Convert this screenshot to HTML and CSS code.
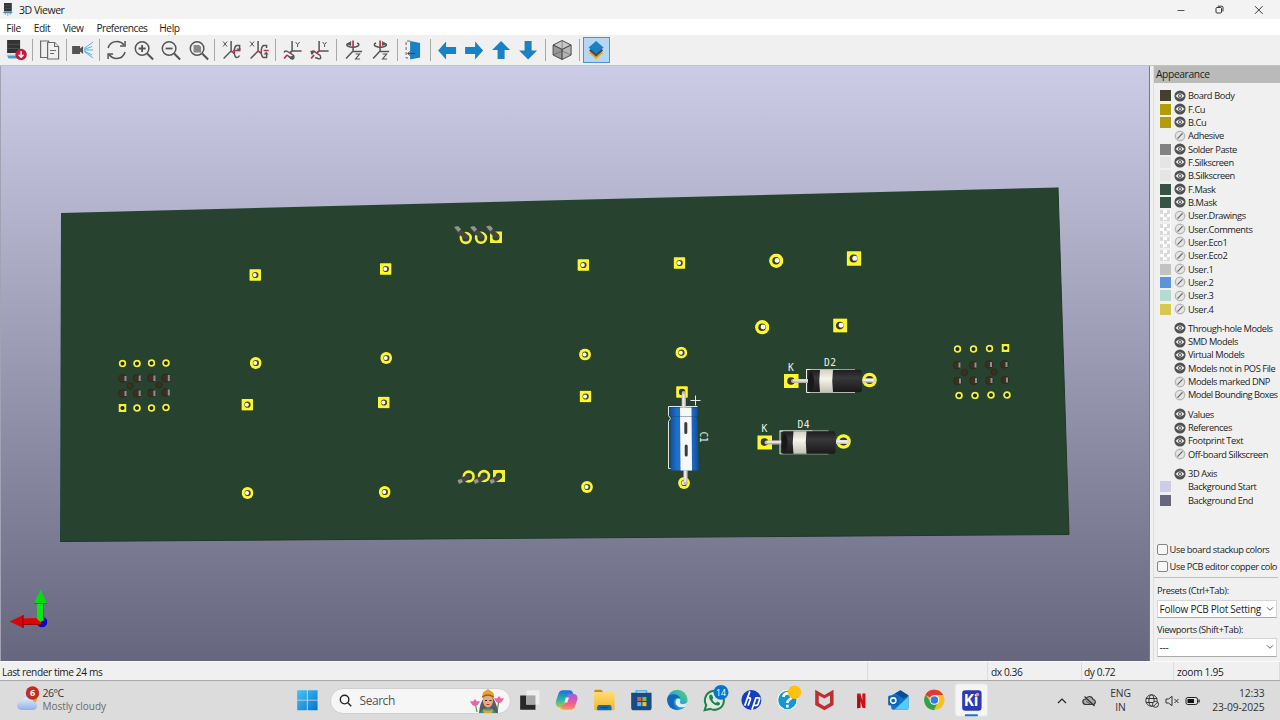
FILE: index.html
```html
<!DOCTYPE html>
<html lang="en">
<head>
<meta charset="utf-8">
<title>3D Viewer</title>
<link rel="stylesheet" href="styles.css">
</head>
<body>
<svg class="defs" width="0" height="0">
  <defs>
    <linearGradient id="sky" x1="0" y1="0" x2="0" y2="1"><stop offset="0" stop-color="#cccce6"/><stop offset="1" stop-color="#66667f"/></linearGradient>
    <linearGradient id="black-body" x1="0" y1="0" x2="0" y2="1"><stop offset="0" stop-color="#1d1d1e"/><stop offset=".35" stop-color="#38383b"/><stop offset="1" stop-color="#19191a"/></linearGradient>
    <linearGradient id="band" x1="0" y1="0" x2="0" y2="1"><stop offset="0" stop-color="#d3d1c4"/><stop offset=".4" stop-color="#f7f5ea"/><stop offset="1" stop-color="#c3c1b4"/></linearGradient>
    <linearGradient id="blue-can" x1="0" y1="0" x2="1" y2="0"><stop offset="0" stop-color="#0e4f9e"/><stop offset=".25" stop-color="#2070cc"/><stop offset=".8" stop-color="#1b66c0"/><stop offset="1" stop-color="#124a94"/></linearGradient>
    <linearGradient id="win" x1="0" y1="0" x2="1" y2="1"><stop offset="0" stop-color="#45c5f5"/><stop offset="1" stop-color="#0673cf"/></linearGradient>
    <linearGradient id="cloud" x1="0" y1="0" x2="0" y2="1"><stop offset="0" stop-color="#e5effb"/><stop offset="1" stop-color="#8fb2ea"/></linearGradient>
    <linearGradient id="edge" x1="0" y1="1" x2="1" y2="0"><stop offset="0" stop-color="#0b63bd"/><stop offset=".5" stop-color="#25a7d8"/><stop offset="1" stop-color="#62d65a"/></linearGradient>
    <linearGradient id="folder" x1="0" y1="0" x2="0" y2="1"><stop offset="0" stop-color="#ffdc6b"/><stop offset="1" stop-color="#f2b62f"/></linearGradient>
    <linearGradient id="cop-a" x1="0" y1="0" x2="0" y2="1"><stop offset="0" stop-color="#1a6fe0"/><stop offset=".5" stop-color="#2db6a5"/><stop offset="1" stop-color="#f0c62c"/></linearGradient>
    <linearGradient id="cop-b" x1="0" y1="0" x2="0" y2="1"><stop offset="0" stop-color="#a35be6"/><stop offset=".6" stop-color="#ef5d8f"/><stop offset="1" stop-color="#fb9a50"/></linearGradient>

    <symbol id="eye" viewBox="0 0 12 12"><circle cx="6" cy="6" r="5.6" fill="#4f5153"/><path d="M1.7 6Q6 1.1 10.3 6Q6 10.9 1.7 6z" fill="#f4f4f4"/><circle cx="6" cy="6" r="2" fill="#4f5153"/><circle cx="6" cy="6" r=".9" fill="#f4f4f4"/></symbol>
    <symbol id="off" viewBox="0 0 12 12"><circle cx="6" cy="6" r="4.7" fill="#e6e6e6" stroke="#b9b9b9" stroke-width="1.4"/><path d="M3.5 8.6l5-5.2" stroke="#666" stroke-width="1.3"/></symbol>
    <symbol id="chev" viewBox="0 0 8 6"><path d="M1 1.3l3 3 3-3" fill="none" stroke="#666" stroke-width="1"/></symbol>

    <symbol id="sq" viewBox="0 0 14 14"><rect x=".2" y=".2" width="13.6" height="13.6" rx=".8" fill="#fcf82c"/><circle cx="6.6" cy="7" r="3.7" fill="#37341f"/><circle cx="7.8" cy="6.8" r="2.4" fill="#f5f5f5"/></symbol>
    <symbol id="rd" viewBox="0 0 14 14"><circle cx="7" cy="7" r="6.9" fill="#fcf82c"/><circle cx="6.8" cy="7" r="3.6" fill="#37341f"/><circle cx="7.8" cy="6.8" r="2.4" fill="#f5f5f5"/></symbol>
    <symbol id="sqs" viewBox="0 0 12 12"><rect x=".2" y=".2" width="11.6" height="11.6" rx=".8" fill="#fcf82c"/><circle cx="6.2" cy="6" r="3.1" fill="#4a4531"/><circle cx="5.5" cy="6" r="2" fill="#fff"/></symbol>
    <symbol id="rds" viewBox="0 0 12 12"><circle cx="6" cy="6" r="5.9" fill="#fcf82c"/><circle cx="6.2" cy="6" r="3.1" fill="#4a4531"/><circle cx="5.5" cy="6" r="2" fill="#fff"/></symbol>
    <symbol id="pin" viewBox="0 0 8 8"><circle cx="4" cy="4" r="2.9" fill="#21261a" stroke="#f4f136" stroke-width="1.8"/></symbol>
    <symbol id="pinsq" viewBox="0 0 8 8"><rect width="8" height="8" rx=".6" fill="#f4f136"/><circle cx="4" cy="4" r="2.1" fill="#21261a"/></symbol>
    <symbol id="diode" viewBox="0 0 91 26">
      <path d="M54 2.5H21.5v23H70" fill="none" stroke="#e9eee9"/><path d="M21 2.5h49" stroke="#e9eee9" stroke-width=".8"/>
      <path d="M8 14h18" stroke="#b6b2a8" stroke-width="4.2" stroke-linecap="round"/><path d="M9 13.3h17" stroke="#e6e3da" stroke-width="2.2" stroke-linecap="round"/>
      <rect x="23" y="2.8" width="54" height="22.4" rx="2.5" fill="url(#black-body)"/><ellipse cx="26" cy="14" rx="3" ry="9" fill="#18181a"/>
      <path d="M35 2.8h13q-1.5 11 0 22.4H35q-1.5-11 0-22.4z" fill="url(#band)"/>
      <path d="M77.5 13.5h11.500" stroke="#c8c5bb" stroke-width="4.2"/><circle cx="89" cy="13.5" r="2.1" fill="#d8d5cb"/><path d="M78 12.8h11" stroke="#f1efe8" stroke-width="2.2"/>
    </symbol>
  </defs>
</svg>

<header class="titlebar">
  <svg class="app-icon" viewBox="0 0 10 13"><path d="M1 0h7.8v8.5H1z" fill="#333638"/><path d="M.8 2.8h8M.8 5.5h8" stroke="#54585a" stroke-width=".6"/><path d="M0 9h9.8l-1 1.3h-8z" fill="#4e87ad"/><path d="M2.3 10v2M4.8 10v3M7.3 10v2" stroke="#7ab4dc"/></svg>
  <span class="title">3D Viewer</span>
  <svg class="winctl" viewBox="0 0 90 12"><path d="M.5 6.5h7" stroke="#555" stroke-width="1"/><g fill="none" stroke="#333" stroke-width="1"><rect x="39" y="3.5" width="5.5" height="5.5" rx="1"/><path d="M40.8 2.2h4q1.2 0 1.2 1.2v4"/><path d="M78 2.2l7.6 7.6M85.6 2.2L78 9.8"/></g></svg>
</header>
<nav class="menubar"><span>File</span><span>Edit</span><span>View</span><span class="wide">Preferences</span><span>Help</span></nav>

<div class="toolbar">
  <svg class="tb" viewBox="0 0 27 26"><path d="M5 3h13v13H5z" fill="#303233"/><path d="M5 7.3h13M5 11.5h13" stroke="#4c4f50"/><path d="M4.5 16.5h13v2h-13z" fill="#ddd"/><path d="M5 18.5h12l-1.5 3H6.5z" fill="#4a9bd4"/><circle cx="19" cy="17.5" r="5.7" fill="#c31d3d"/><path d="M19 14v6M16.5 17.8L19 20.3l2.5-2.5" fill="none" stroke="#fff" stroke-width="1.5"/></svg>
  <i class="sep"></i>
  <svg class="tb" viewBox="0 0 27 26"><g fill="#f0f0f0" stroke="#6a6a6a" stroke-width="1.2"><path d="M4.5 4h8v16.5h-8z"/><path d="M11.5 5.5h7l4 4V22h-11z"/><path d="M18.5 5.5v4h4M14 13.500h6M14 16.500h4"/></g></svg>
  <i class="sep"></i>
  <svg class="tb" viewBox="0 0 27 26"><path d="M3 9h8v2.5L14 9v8l-3-2.5V17H3z" fill="#545454"/><path d="M15 11.5L24 5M15 12.5l8-3M15 13h9M15 14l8 4M15 14.5L24 21" stroke="#55b1e3" stroke-width="1"/></svg>
  <i class="sep"></i>
  <svg class="tb" viewBox="0 0 27 26"><g fill="none" stroke="#555" stroke-width="1.5"><path d="M5 11q2-6.5 9-6.5 4 0 7 3.500M22 15q-2 6.5-8.5 6.500-4.500 0-7.500-4"/><path d="M22 4v5h-5M5 22v-5h5"/></g></svg>
  <svg class="tb" viewBox="0 0 27 26"><g fill="none" stroke="#555" stroke-width="1.5"><circle cx="12" cy="11.5" r="6.8"/><path d="M17 16.5l6 6" stroke-width="2"/><path d="M12 8v7M8.500 11.500h7" stroke-width="1.8"/></g></svg>
  <svg class="tb" viewBox="0 0 27 26"><g fill="none" stroke="#555" stroke-width="1.5"><circle cx="12" cy="11.5" r="6.8"/><path d="M17 16.5l6 6" stroke-width="2"/><path d="M8.5 11.5h7" stroke-width="1.8"/></g></svg>
  <svg class="tb" viewBox="0 0 27 26"><g fill="none" stroke="#555" stroke-width="1.5"><circle cx="12" cy="11.5" r="6.8"/><path d="M17 16.5l6 6" stroke-width="2"/></g><path d="M8.5 8h5.500l2 2v5.500H8.500z" fill="#888"/></svg>
  <i class="sep"></i>
  <svg class="tb" viewBox="0 0 27 26"><g fill="none" stroke="#555" stroke-width="1.5"><path d="M5 4.5l4 5M9 4.5l-4 5" stroke-width="1"/><path d="M13 4v10L5.5 21.5"/><path d="M21.5 12V8.500h-3q-2.300 1-2.300 6t2 6q2 .5 3.300-2"/></g><path d="M13 14l3.500 2.500M15 13.500h7.500" stroke="#c32b4c" stroke-width="1.6"/><path d="M18.500 11.500h4.500l-2 3z" fill="#555"/></svg>
  <svg class="tb" viewBox="0 0 27 26"><g fill="none" stroke="#555" stroke-width="1.5"><path d="M5 4.5l4 5M9 4.5l-4 5" stroke-width="1"/><path d="M13 4v10L5.5 21.5"/><path d="M21.500 11V8.500h-3q-2.300 1-2.300 6t2 6h3.300V17"/></g><path d="M13 14l3.500 2.500M18.500 13.500h5" stroke="#c32b4c" stroke-width="1.6"/><path d="M18.500 17.500h5l-2.500-3z" fill="#555"/></svg>
  <i class="sep"></i>
  <svg class="tb" viewBox="0 0 27 26"><g fill="none" stroke="#555" stroke-width="1.5"><path d="M13 4v10h9.500"/><path d="M16.500 5l2 2.500 2-2.500M18.500 7.500V10" stroke-width="1"/><path d="M5 15.500q1-3 5 0l4.500 3q1.500 4-2.500 3l-4-3.500"/></g><path d="M9.500 20l5-1.500-.5 4.500z" fill="#555"/><path d="M13 14l-2.500 2M8 18l-3 3.500" stroke="#c32b4c" stroke-width="1.800"/></svg>
  <svg class="tb" viewBox="0 0 27 26"><g fill="none" stroke="#555" stroke-width="1.5"><path d="M13 4v10h9.500"/><path d="M16.500 5l2 2.500 2-2.500M18.500 7.500V10" stroke-width="1"/><path d="M6 17.500q-2-4 2-3l6 4q2 4-2 3l-3-1"/></g><path d="M4 14l5-.5-2.500 4z" fill="#555"/><path d="M13 14l-2.500 2M8 18l-3 3.500" stroke="#c32b4c" stroke-width="1.800"/></svg>
  <i class="sep"></i>
  <svg class="tb" viewBox="0 0 27 26"><g fill="none" stroke="#555" stroke-width="1.5"><path d="M13 10v4.500h9M13 14l-7 7.500"/><path d="M15.500 17h4l-4 5h4.500" stroke-width="1.2"/><path d="M10 6q-5 1-2.500 3 5 2.500 10.500 0 2-2-1-3"/></g><path d="M11 4v5L6.500 7z" fill="#555"/><path d="M13 3.500V10" stroke="#c32b4c" stroke-width="1.700"/></svg>
  <svg class="tb" viewBox="0 0 27 26"><g fill="none" stroke="#555" stroke-width="1.5"><path d="M13 10v4.500h9M13 14l-7 7.500"/><path d="M15.500 17h4l-4 5h4.500" stroke-width="1.2"/><path d="M16 6q5 1 2.500 3-5 2.500-10.500 0-2-2 1-3"/></g><path d="M15 4v5l4.500-2z" fill="#555"/><path d="M13 3.500V10" stroke="#c32b4c" stroke-width="1.700"/></svg>
  <i class="sep"></i>
  <svg class="tb" viewBox="0 0 27 26"><path d="M10 4l10 2v14.500L10 22.500z" fill="#1a81c4"/><path d="M10 4H6v17h4" fill="none" stroke="#666" stroke-dasharray="3 2"/><path d="M8 16.500h7M10 14.500l-2.500 2 2.500 2" fill="none" stroke="#444"/></svg>
  <i class="sep"></i>
  <svg class="tb" viewBox="0 0 27 26"><path d="M4 13.500l8-9V10h10v7H12v5.500z" fill="#1a81c4"/></svg>
  <svg class="tb" viewBox="0 0 27 26"><path d="M22 13.500l-8-9V10H4v7h10v5.500z" fill="#1a81c4"/></svg>
  <svg class="tb" viewBox="0 0 27 26"><path d="M13 4l9 9h-5.500v9h-7v-9H4z" fill="#1a81c4"/></svg>
  <svg class="tb" viewBox="0 0 27 26"><path d="M13 22.500l9-9h-5.500V4h-7v9.500H4z" fill="#1a81c4"/></svg>
  <i class="sep"></i>
  <svg class="tb" viewBox="0 0 27 26"><g stroke="#4b4b4b" stroke-width="1"><path d="M13 3.500l9 4.500-9 4.500L4 8z" fill="#c8c8c8"/><path d="M4 8l9 4.500v10L4 18z" fill="#989898"/><path d="M22 8l-9 4.500v10l9-4.500z" fill="#b5b5b5"/><path d="M4 18l9-4 9 4M13 3.500V14" fill="none" stroke-width=".5"/></g></svg>
  <i class="sep"></i>
  <svg class="tb on" viewBox="0 0 27 26"><path d="M6 16l7 6 7-6-2-2H8z" fill="#eda01f"/><path d="M6 13.500l7 6 7-6-2-2H8z" fill="#474747"/><path d="M13 4l7.500 6.500L13 17l-7.500-6.500z" fill="#1a81c4"/></svg>
</div>

<main class="work">
  <svg class="scene" viewBox="0 66 1150 595">
    <rect x="0" y="66" width="1150" height="595" fill="url(#sky)"/>
    <path d="M.5 66v595" stroke="#a2a2b4"/><path d="M1149.500 66v595" stroke="#77778a"/>
    <path d="M61 213L1058 187.500 1069 534.500 60 541.500z" fill="#27432f"/>
    <path d="M1058 187.500L1069 534.500 60 541.500" fill="none" stroke="#1f3927"/>

    <use href="#sqs" x="249.200" y="269" width="12" height="12"/><use href="#sqs" x="379.700" y="263" width="12" height="12"/><use href="#sqs" x="577.300" y="259" width="12" height="12"/><use href="#sqs" x="673.500" y="257" width="12" height="12"/>
    <use href="#rds" x="249.700" y="357" width="12" height="12"/><use href="#rds" x="380.200" y="352" width="12" height="12"/><use href="#rds" x="579" y="348.500" width="12" height="12"/><use href="#rds" x="675.300" y="346.700" width="12" height="12"/>
    <use href="#sqs" x="241.300" y="398.700" width="12" height="12"/><use href="#sqs" x="377.800" y="396.500" width="12" height="12"/><use href="#sqs" x="579.500" y="390.500" width="12" height="12"/><use href="#sqs" x="676" y="386" width="12" height="12"/>
    <use href="#rds" x="241.500" y="487" width="12" height="12"/><use href="#rds" x="378.700" y="486" width="12" height="12"/><use href="#rds" x="581" y="481" width="12" height="12"/><use href="#rds" x="678" y="477" width="12" height="12"/>
    <use href="#rd" x="769" y="253.500" width="14.500" height="14.500"/><use href="#rd" x="755" y="320" width="14.500" height="14.500"/>
    <use href="#sq" x="846.500" y="251" width="15" height="15"/><use href="#sq" x="833" y="318.300" width="14.500" height="14.500"/>

    <g fill="none" stroke="#f4f136" stroke-width="2.600"><circle cx="465.800" cy="238" r="4.900"/><circle cx="481" cy="237.800" r="4.900"/><circle cx="468.700" cy="476.500" r="4.900"/><circle cx="484" cy="476" r="4.900"/></g>
    <path d="M490 231.500h12V243h-12zM493 470h12v12h-12z" fill="#f4f136"/>
    <g fill="#27432f"><circle cx="496" cy="237" r="3.500"/><circle cx="499" cy="476" r="3.200"/></g>
    <g stroke="#43463f" stroke-width="5" stroke-linecap="round"><path d="M457.500 229.500l8 7M473.500 229.300l8 7M489.500 229l7 7M460.500 481l7-3.500M476.500 481l7-3.500M492.500 481l6-3.500"/></g>
    <g fill="#929693"><path d="M454 227l4-1 3 3-2.500 3zM470 227l4-1 3 3-2.500 3zM486 226.500l4-1 3 3-2.500 3z"/><path d="M457.500 480l4-1 1.500 3-4 2zM473.500 480l4-1 1.500 3-4 2zM489.500 480l4-1 1.500 3-4 2z"/></g>

    <g fill="#3d2f1e" stroke="#262b1c" stroke-width=".8">
      <circle cx="122.500" cy="378.500" r="3.900"/><circle cx="137" cy="378.300" r="3.900"/><circle cx="151.500" cy="378" r="3.900"/><circle cx="165.500" cy="378" r="3.900"/>
      <circle cx="122.500" cy="393.500" r="3.900"/><circle cx="137" cy="393.300" r="3.900"/><circle cx="151.500" cy="393" r="3.900"/><circle cx="165.500" cy="392.500" r="3.900"/>
      <circle cx="957" cy="365" r="3.900"/><circle cx="973" cy="365" r="3.900"/><circle cx="989" cy="364.500" r="3.900"/><circle cx="1004.500" cy="364.300" r="3.900"/>
      <circle cx="957.500" cy="381" r="3.900"/><circle cx="973.500" cy="380.700" r="3.900"/><circle cx="989.500" cy="380.500" r="3.900"/><circle cx="1005" cy="380" r="3.900"/>
      <circle cx="130" cy="386" r="3.200"/><circle cx="159" cy="385" r="3.200"/><circle cx="964.500" cy="372.500" r="3.200"/><circle cx="994" cy="372" r="3.200"/>
    </g>
    <g stroke="#8f8f98" stroke-width="2">
      <path d="M125.500 376v5M139.700 375.500v5.500M154.400 375.500v5.500M168.800 375v6M125.500 391v5M139.700 390.500v5.500M154.400 390.500v5.500M168.800 389.500v6"/>
      <path d="M959.500 362.500v5M975.500 362.500v5M991 362v5M1006.500 362v5M960 378.500v5M976 378v5M991.500 378v5M1007 377.500v5"/>
    </g>
    <use href="#pin" x="118.500" y="359.500" width="8" height="8"/><use href="#pin" x="133" y="359.500" width="8" height="8"/><use href="#pin" x="147.500" y="359" width="8" height="8"/><use href="#pin" x="162" y="359" width="8" height="8"/>
    <use href="#pinsq" x="118.500" y="404" width="8" height="8"/><use href="#pin" x="133" y="404" width="8" height="8"/><use href="#pin" x="147.500" y="404" width="8" height="8"/><use href="#pin" x="162" y="403.500" width="8" height="8"/>
    <use href="#pin" x="953.500" y="345" width="8" height="8"/><use href="#pin" x="969.500" y="345" width="8" height="8"/><use href="#pin" x="985.500" y="344.500" width="8" height="8"/><use href="#pinsq" x="1001.500" y="344" width="8" height="8"/>
    <use href="#pin" x="955" y="391.500" width="8" height="8"/><use href="#pin" x="971" y="391.500" width="8" height="8"/><use href="#pin" x="987" y="391" width="8" height="8"/><use href="#pin" x="1003" y="391" width="8" height="8"/>

    <path d="M784 374h14.500v14H784zM757.500 435.500H772v14h-14.500z" fill="#fcf82c"/>
    <circle cx="869.500" cy="380" r="7.300" fill="#fcf82c"/><circle cx="869.500" cy="380" r="4" fill="#37341f"/><circle cx="843.500" cy="441.500" r="7.300" fill="#fcf82c"/><circle cx="843.500" cy="441.500" r="4" fill="#37341f"/>
    <circle cx="791" cy="381" r="3.800" fill="#37341f"/><circle cx="764.500" cy="442" r="3.800" fill="#37341f"/>
    <use href="#diode" x="785" y="367" width="91" height="26"/><use href="#diode" x="758.500" y="428.500" width="91" height="26"/>
    <g class="silk"><text x="824" y="366.300" textLength="12">D2</text><text x="797.500" y="427.500" textLength="12">D4</text><text x="788" y="371.300">K</text><text x="761.500" y="432.300">K</text><text transform="translate(700 431.500) rotate(90)" textLength="11">C1</text></g>

    <path d="M697.500 406.500H668.500v9l2 3-2 3v47h3M690.500 400.500h10M695.500 395.500v10" fill="none" stroke="#e4ebe5"/>
    <circle cx="682" cy="392" r="3.200" fill="#37341f"/>
    <path d="M683.800 393v15M685.500 469v14" stroke="#c2beb5" stroke-width="4.200" stroke-linecap="round"/><path d="M683.500 394v14M685.200 469v13" stroke="#eeebe4" stroke-width="2"/>
    <path d="M670 407.500h27.500v8l-1 2 1 3 1.300 50H670.500V420l1.500-2-2-3z" fill="url(#blue-can)"/>
    <path d="M680 407.500h11.500l.5 63h-11.500z" fill="#f7f8fa"/><path d="M671 416.500h26" stroke="#123f78" stroke-opacity=".4"/>
    <path d="M685.800 423.500v9M686.200 446v9" stroke="#3c3c3f" stroke-width="3" stroke-linecap="round"/>

    <circle cx="42" cy="622" r="5.300" fill="#0505c5"/>
    <path d="M22 618.500l19-.5v7H22z" fill="#e40000"/><path d="M9.500 621.500l14-6.500v13z" fill="#d70505"/><path d="M23 615v13" stroke="#8e0000"/><path d="M22 624.500h19" stroke="#920000"/>
    <path d="M37 602h7v18l-3.500 2-3.500-3z" fill="#04ea0e"/><path d="M40.500 589.500l6.500 14H34z" fill="#04dc0e"/><path d="M34 603.500h13M43.500 604v16" stroke="#078a0d"/>
  </svg>

  <aside class="panel">
    <h2>Appearance</h2>
    <div class="rows">
      <div class="row"><i class="sw body"></i><svg><use href="#eye"/></svg><span>Board Body</span></div>
      <div class="row"><i class="sw cu"></i><svg><use href="#eye"/></svg><span>F.Cu</span></div>
      <div class="row"><i class="sw cu"></i><svg><use href="#eye"/></svg><span>B.Cu</span></div>
      <div class="row"><i class="sw"></i><svg><use href="#off"/></svg><span>Adhesive</span></div>
      <div class="row"><i class="sw paste"></i><svg><use href="#eye"/></svg><span>Solder Paste</span></div>
      <div class="row"><i class="sw silkc"></i><svg><use href="#eye"/></svg><span>F.Silkscreen</span></div>
      <div class="row"><i class="sw silkc"></i><svg><use href="#eye"/></svg><span>B.Silkscreen</span></div>
      <div class="row"><i class="sw mask"></i><svg><use href="#eye"/></svg><span>F.Mask</span></div>
      <div class="row"><i class="sw mask"></i><svg><use href="#eye"/></svg><span>B.Mask</span></div>
      <div class="row"><i class="sw check"></i><svg><use href="#off"/></svg><span>User.Drawings</span></div>
      <div class="row"><i class="sw check"></i><svg><use href="#off"/></svg><span>User.Comments</span></div>
      <div class="row"><i class="sw check"></i><svg><use href="#off"/></svg><span>User.Eco1</span></div>
      <div class="row"><i class="sw check"></i><svg><use href="#off"/></svg><span>User.Eco2</span></div>
      <div class="row"><i class="sw u1"></i><svg><use href="#off"/></svg><span>User.1</span></div>
      <div class="row"><i class="sw u2"></i><svg><use href="#off"/></svg><span>User.2</span></div>
      <div class="row"><i class="sw u3"></i><svg><use href="#off"/></svg><span>User.3</span></div>
      <div class="row"><i class="sw u4"></i><svg><use href="#off"/></svg><span>User.4</span></div>
    </div>
    <div class="rows">
      <div class="row"><i class="sw"></i><svg><use href="#eye"/></svg><span>Through-hole Models</span></div>
      <div class="row"><i class="sw"></i><svg><use href="#eye"/></svg><span>SMD Models</span></div>
      <div class="row"><i class="sw"></i><svg><use href="#eye"/></svg><span>Virtual Models</span></div>
      <div class="row"><i class="sw"></i><svg><use href="#eye"/></svg><span>Models not in POS File</span></div>
      <div class="row"><i class="sw"></i><svg><use href="#off"/></svg><span>Models marked DNP</span></div>
      <div class="row tight"><i class="sw"></i><svg><use href="#off"/></svg><span>Model Bounding Boxes</span></div>
    </div>
    <div class="rows">
      <div class="row"><i class="sw"></i><svg><use href="#eye"/></svg><span>Values</span></div>
      <div class="row"><i class="sw"></i><svg><use href="#eye"/></svg><span>References</span></div>
      <div class="row"><i class="sw"></i><svg><use href="#eye"/></svg><span>Footprint Text</span></div>
      <div class="row"><i class="sw"></i><svg><use href="#off"/></svg><span>Off-board Silkscreen</span></div>
    </div>
    <div class="rows">
      <div class="row"><i class="sw"></i><svg><use href="#eye"/></svg><span>3D Axis</span></div>
      <div class="row"><i class="sw bgs"></i><svg></svg><span>Background Start</span></div>
      <div class="row"><i class="sw bge"></i><svg></svg><span>Background End</span></div>
    </div>
    <div class="options">
      <div class="opt"><i class="box"></i><span>Use board stackup colors</span></div>
      <div class="opt"><i class="box"></i><span>Use PCB editor copper colo</span></div>
    </div>
    <div class="field">Presets (Ctrl+Tab):</div>
    <div class="select"><span>Follow PCB Plot Setting</span><svg><use href="#chev"/></svg></div>
    <div class="field second">Viewports (Shift+Tab):</div>
    <div class="select"><span>---</span><svg><use href="#chev"/></svg></div>
  </aside>
</main>

<footer class="status"><span class="msg">Last render time 24 ms</span><span class="blank"></span><span class="dx">dx 0.36</span><span class="dy">dy 0.72</span><span class="zoom">zoom 1.95</span></footer>

<div class="taskbar">
  <div class="weather">
    <svg viewBox="0 0 24 28"><circle cx="16" cy="14" r="5" fill="#f5a13a"/><path d="M6 25q-5-.5-5-4.500 0-4 4.500-4 2-4.500 6-4.500 5 0 6 5 3.500 0 3.500 4 0 4-4 4z" fill="url(#cloud)"/><circle cx="16.500" cy="8" r="6.700" fill="#c42b23"/><text x="14" y="11.300">6</text></svg>
    <div><b>26°C</b><span>Mostly cloudy</span></div>
  </div>
  <svg class="app" viewBox="0 0 36 36"><path d="M8 9h9.500v9.300H8zM18.300 9H28v9.300h-9.700zM8 19h9.500v9.500H8zM18.300 19H28v9.500h-9.700z" fill="url(#win)"/></svg>
  <div class="search">
    <svg class="lens" viewBox="0 0 14 14"><g fill="none" stroke="#222" stroke-width="1.500"><circle cx="6" cy="6" r="4.600"/><path d="M9.500 9.500l3.700 3.700"/></g></svg>
    <span>Search</span>
    <svg class="art" viewBox="0 0 34 24"><path d="M5 13l2 10M29 11l-2 12" stroke="#4b9b43" stroke-width="1.200"/><path d="M9 24q1-11 5-15h9q4 6 5 15z" fill="#5a5a62"/><path d="M10 24q3-5 8-5t8 5z" fill="#2f9b82"/><path d="M12 9q0-6 3-7l3-2 3 2q4 2 3 7z" fill="#e3a42c"/><ellipse cx="18" cy="12" rx="5" ry="6.500" fill="#e6ab80"/><path d="M12.500 8q5-4 11 0" stroke="#9c5e18" stroke-width="1.500" fill="none"/><path d="M15 11.500h2M19.500 11.500h2" stroke="#3e2118"/><path d="M16.500 15.500h3" stroke="#bd2838"/><path d="M13 20q5 3 10 0l-1 4h-8z" fill="#e0a13a"/><path d="M0 12l3 .5 2-2.500 2 2.500 3-.5q-2 5-5 5t-5-5zM24 9l3 .5 2-2.500 2 2.500 3-.5q-2 5-5 5t-5-5z" fill="#ed65a5"/></svg>
  </div>
  <div class="apps">
    <svg class="app" viewBox="0 0 36 36"><path d="M14 9h13v14H14z" fill="#efefef"/><path d="M8 14h6v9h9v5H8z" fill="#292929"/><path d="M14 14h9v9h-9z" fill="#a9a9a9"/></svg>
    <svg class="app" viewBox="0 0 36 36"><path d="M14 9h6q3 0 4 4l1 3h-4l-3 10q-1 2-4 2h-1q-2 0-2-2l-3-1q-2-2-1-6l2-6q1-4 5-4z" fill="url(#cop-a)"/><path d="M22 28h-6q-3 0-4-4l2-.5q2 0 3-4l2-7h5q4 0 4 5l-2 6q-1 4-4 4.500z" fill="url(#cop-b)"/><path d="M16.500 16h3l-1.500 5h-3z" fill="#fff" opacity=".9"/></svg>
    <svg class="app" viewBox="0 0 36 36"><path d="M8 10q0-1.500 1.500-1.500H15l2 2.500H8z" fill="#c98b17"/><path d="M8 11h20v16q0 1.500-1.500 1.500h-17Q8 28.500 8 27z" fill="url(#folder)"/><path d="M11 28.500v-3q0-2 2-2h10q2 0 2 2v3z" fill="#146bb5"/><path d="M14.500 26h7" stroke="#0b477f"/></svg>
    <svg class="app" viewBox="0 0 36 36"><path d="M13 12V9.500h10V12" fill="none" stroke="#56b6e6" stroke-width="1.500"/><path d="M8 11.500h20V26q0 2.500-2.500 2.500h-15Q8 28.500 8 26z" fill="#174b86"/><path d="M14 15.500h4v4h-4z" fill="#ed5537"/><path d="M19 15.500h4v4h-4z" fill="#7dbb42"/><path d="M14 20.500h4v4h-4z" fill="#4db9f1"/><path d="M19 20.500h4v4h-4z" fill="#f8bc2c"/></svg>
    <svg class="app" viewBox="0 0 36 36"><circle cx="18" cy="18.500" r="10" fill="url(#edge)"/><path d="M8.300 16q3-4 8-3 4 1 4.500 4.500-4-2.500-6 1-1.500 5 3 9.500-9-.5-9.700-9z" fill="#1565b9"/><path d="M17 18q2-2 4 0-1 3 0 4 3 1.500 7-1-1 2.500-2.500 4-6 2-9-2-1-2.500.5-5z" fill="#dceffc"/></svg>
    <svg class="app" viewBox="0 0 36 36"><path d="M8.500 28.500l1.500-5a9.300 9.300 0 1 1 4 3.700z" fill="#e1e7e2" stroke="#23824c" stroke-width="2"/><path d="M14 13q-2 1.500-.5 5 3 5.500 7.500 6 3-.5 2.500-2.500L21 20l-1.500 1.500q-2.500-1-3.500-3.500l1-1.500-1.200-3z" fill="#23824c"/><circle cx="24.500" cy="11" r="7.300" fill="#0874cd"/><text x="19.600" y="14.200" class="badge">14</text></svg>
    <svg class="app" viewBox="0 0 36 36"><circle cx="18" cy="18.500" r="9.800" fill="#123fc4"/><path d="M16.500 10l-5 14M13.500 16.500h2.500q1.500 0 1 1.500l-2.200 6M18.500 28l4-11.500H25q1.500 0 1 1.500l-1.500 4.500q-.5 1.300-2 1.300H20.500" fill="none" stroke="#fff" stroke-width="1.700"/></svg>
    <svg class="app" viewBox="0 0 36 36"><circle cx="18" cy="18.500" r="9.500" fill="#1597d4" stroke="#fff"/><path d="M14 15.500q.5-3.500 4-3.500t4 3q0 2-2 3.200-2 1-2 3.300M16.700 24.500h2.600" fill="none" stroke="#fff" stroke-width="2.600"/><circle cx="25" cy="11" r="6.600" fill="#ffc20e"/></svg>
    <svg class="app" viewBox="0 0 36 36"><path d="M9 8.500l9 5 9-5v15l-9 5-9-5z" fill="#bd302f"/><path d="M12.500 14l5.500 3 5.500-3v7.500l-5.500 3-5.500-3z" fill="#dadada"/></svg>
    <svg class="app" viewBox="0 0 36 36"><path d="M14 12h3l2 7v-7h3v14.500l-3-.5-2-7v7l-3 .5z" fill="#d10e16"/><path d="M14 12v14.500l3-.5V19z" fill="#a40b12"/></svg>
    <svg class="app" viewBox="0 0 36 36"><path d="M11 14l9-5 8 5v12q0 2-2 2H13q-2 0-2-2z" fill="#1172ca"/><path d="M15 12l8 5 5-3-8-5z" fill="#0c4c92"/><path d="M28 15L14 28h12q2 0 2-2z" fill="#56cbf5"/><rect x="8" y="14" width="10" height="10" rx="1.500" fill="#1062b2"/><circle cx="13" cy="19" r="2.600" fill="none" stroke="#fff" stroke-width="1.500"/></svg>
    <svg class="app" viewBox="0 0 36 36"><circle cx="18" cy="18.500" r="10" fill="#f7c31b"/><path d="M18 18.500L9.300 13.500a10 10 0 0 1 17.400 0H18z" fill="#df3c32"/><path d="M9.300 13.500a10 10 0 0 0 8 15l4.500-8-7 0z" fill="#2da14e"/><path d="M9.300 13.500A10 10 0 0 1 18 8.500v5z" fill="#df3c32"/><circle cx="18" cy="18.500" r="4.700" fill="#fff"/><circle cx="18" cy="18.500" r="3.700" fill="#3979df"/></svg>
    <svg class="app" viewBox="0 0 36 36"><rect x="2" y="2.500" width="32" height="32" rx="3" fill="#f5f5f5" stroke="#e2e2e2"/><rect x="9" y="9" width="19" height="20" rx="3" fill="#2d38b2"/><text x="10.500" y="24.300" class="ki">Ki</text><circle cx="24" cy="13" r="1.700" fill="#f19a55"/><path d="M12.500 33.500h11" stroke="#1679c6" stroke-width="2" stroke-linecap="round"/></svg>
  </div>
  <div class="tray">
    <svg class="up" viewBox="0 0 10 10"><path d="M1 7l4-4 4 4" fill="none" stroke="#222" stroke-width="1.200"/></svg>
    <svg class="sync" viewBox="0 0 14 12"><path d="M3.500 9.500Q.8 9 .8 6.500 1 4 3.800 4 5 1.500 7.500 1.500q3 0 3.500 3 2.300.3 2.300 2.500 0 2.500-2.500 2.500zM2.500 1.500l10 9.500" fill="#aaa" stroke="#333" stroke-width="1.200"/><path d="M4 6l5 3.500" stroke="#555"/></svg>
    <div class="lang">ENG<br>IN</div>
    <svg class="net" viewBox="0 0 14 14"><g fill="none" stroke="#333" stroke-width="1"><circle cx="6.500" cy="6.500" r="5.700"/><ellipse cx="6.500" cy="6.500" rx="2.600" ry="5.700"/><path d="M1 4.500h11M1 8.500h7"/><circle cx="10.500" cy="10.300" r="3" fill="#ddd"/><path d="M8.500 12.300l4-4"/></g></svg>
    <svg class="vol" viewBox="0 0 14 12"><path d="M1 4h2.500L7 1.300v9.400L3.500 8H1zM9.500 4l4 4M13.500 4l-4 4" fill="none" stroke="#333" stroke-width="1"/></svg>
    <svg class="bat" viewBox="0 0 15 10"><rect x="1" y="1.500" width="11.500" height="7" rx="1.800" fill="none" stroke="#222"/><rect x="2.500" y="3" width="6.500" height="4" rx=".5" fill="#111"/><path d="M14 3.500v3" stroke="#222" stroke-width="1.300"/></svg>
    <div class="clock">12:33<br>23-09-2025</div>
  </div>
</div>
</body>
</html>
```

FILE: styles.css
```css
* { box-sizing: border-box; }
body { margin: 0; width: 1280px; height: 720px; overflow: hidden; display: flex; flex-direction: column; font-family: "Open Sans", "Noto Sans", sans-serif; font-size: 10px; color: #1c1c1c; background: #f0f0f0; }
svg { display: block; flex: none; }
.defs { position: absolute; }
.titlebar { height: 19px; background: #f3f3f3; display: flex; align-items: center; padding: 0 16px 0 3px; flex: none; }
.app-icon { width: 10px; height: 13px; }
.title { margin-left: 6px; font-size: 10.5px; letter-spacing: -.45px; color: #222; }
.winctl { width: 90px; height: 12px; margin-left: auto; margin-right: -3px; }
.menubar { height: 16px; flex: none; background: #fff; display: flex; align-items: center; gap: 12.8px; padding: 1px 0 0 6.3px; font-size: 10.2px; letter-spacing: -.4px; }
.menubar .wide { letter-spacing: -.52px; margin-right: -1px; }
.toolbar { height: 31px; flex: none; display: flex; align-items: center; padding: 0 0 0 2.3px; background: #f0f0f0; border-bottom: 1px solid #c4c4c6; }
.tb { width: 27.2px; height: 26px; }
.tb.on { background: #b5d7f3; outline: 1px solid #4a93d0; outline-offset: -1px; }
.sep { width: 1px; height: 22px; margin: 0 2.7px; background: #a8a8a8; flex: none; }
.work { height: 595px; flex: none; display: flex; }
.scene { width: 1150px; height: 595px; }
.silk text { font: 9.700px "DejaVu Sans Mono", monospace; fill: #e8efe9; }
.panel { flex: 1; margin-left: 3px; min-width: 0; overflow: hidden; background: #f0f0f0; border-left: 1px solid #dedede; }
.panel h2 { margin: 0 0 6.6px; height: 16.5px; line-height: 16px; padding-left: 2px; background: #bababa; font-size: 10.3px; font-weight: 400; letter-spacing: -.4px; }
.rows { margin-bottom: 6px; }
.row { height: 13.33px; display: flex; align-items: center; white-space: nowrap; font-size: 9.3px; letter-spacing: -.42px; padding-left: 5.6px; }
.row.tight { letter-spacing: -.52px; }
.row svg { width: 12px; height: 12px; margin: 0 2.4px 0 3px; }
.sw { width: 11px; height: 11px; flex: none; }
.body { background: #443f2e; }
.cu { background: #b19c05; }
.paste { background: #828282; }
.silkc { background: #e5e5e5; }
.mask { background: #355445; }
.check { background: repeating-conic-gradient(#fff 0 25%, #dadada 0 50%) 0 0 / 7px 7px; }
.u1 { background: #c2c2c2; }
.u2 { background: #5a94dc; }
.u3 { background: #b4dbd1; }
.u4 { background: #d8c852; }
.bgs { background: #cccce6; }
.bge { background: #66667f; }
.options { margin-top: 34.3px; padding: 0 0 2px 3px; border-bottom: 1px solid #bfbfbf; width: 124px; }
.opt { height: 16.7px; display: flex; align-items: center; gap: 1.5px; font-size: 9.3px; letter-spacing: -.4px; white-space: nowrap; }
.box { width: 11px; height: 11px; border: 1px solid #858585; border-radius: 2px; background: #f7f7f7; flex: none; }
.field { height: 22px; padding: 6px 0 0 3px; line-height: 13px; font-size: 9.3px; letter-spacing: -.38px; }
.field.second { height: 20px; padding-top: 4.5px; }
.select { height: 18.5px; width: 120px; margin-left: 3px; background: #fff; border: 1px solid #d5d5d5; border-bottom-color: #aaa; display: flex; align-items: center; padding: 0 2px 0 1.5px; font-size: 10px; letter-spacing: -.24px; white-space: nowrap; overflow: hidden; }
.select svg { width: 8px; height: 6px; margin-left: auto; }
.status { height: 20px; flex: none; display: flex; line-height: 21px; font-size: 10.2px; letter-spacing: -.42px; background: #f0f0f0; border-top: 1px solid #fafafa; border-bottom: 1px solid #aaa; }
.status span { border-right: 1px solid #dcdcdc; padding-left: 3px; }
.status .msg { width: 868px; padding-left: 2px; }
.blank { width: 120px; }
.dx { width: 94px; }
.dy { width: 92px; }
.zoom { flex: 1; }
.status .dy { padding-left: 2px; }
.status .zoom { letter-spacing: -.3px; }
.taskbar { flex: 1; background: #dcdcdc; display: flex; align-items: center; color: #333; }
.weather { width: 289.3px; flex: none; display: flex; padding-left: 16px; gap: 2.5px; align-items: center; }
.weather svg { width: 24px; height: 28px; margin-top: -4px; }
.weather svg text { font: bold 9px "Open Sans", sans-serif; fill: #fff; }
.weather div { display: flex; flex-direction: column; line-height: 13.5px; margin-top: -1px; }
.weather b { font-weight: 400; font-size: 10.5px; letter-spacing: -.5px; }
.weather span { font-size: 10px; letter-spacing: -.05px; color: #6a6a6a; }
.app { width: 36.74px; height: 37px; margin-top: -2px; }
.search { width: 181px; height: 26px; margin: 0 1.8px 0 3.5px; background: #f6f6f6; border: 1px solid #d0d0d0; border-radius: 13px; display: flex; align-items: center; padding-left: 8px; font-size: 12px; letter-spacing: -.45px; color: #555; flex: none; }
.lens { width: 13px; height: 13px; margin-right: 8px; }
.art { width: 34px; height: 24px; margin-left: auto; margin-right: 6px; }
.apps { display: flex; }
.badge { font: 8.5px "Open Sans", sans-serif; fill: #fff; }
.ki { font: bold 15px "Open Sans", sans-serif; fill: #fff; }
.tray { margin-left: auto; display: flex; align-items: center; padding-right: 15.5px; font-size: 10.3px; letter-spacing: -.15px; line-height: 13.5px; }
.up { width: 10px; height: 10px; margin-right: 15px; }
.sync { width: 14px; height: 12px; }
.lang { width: 36px; margin: 0 6.500px 0 7px; text-align: center; }
.net { width: 14px; height: 14px; margin-right: 5.500px; }
.vol { width: 14px; height: 12px; margin-right: 6px; }
.bat { width: 15px; height: 10px; margin-right: 1px; }
.clock { width: 64px; text-align: right; white-space: nowrap; }
```
